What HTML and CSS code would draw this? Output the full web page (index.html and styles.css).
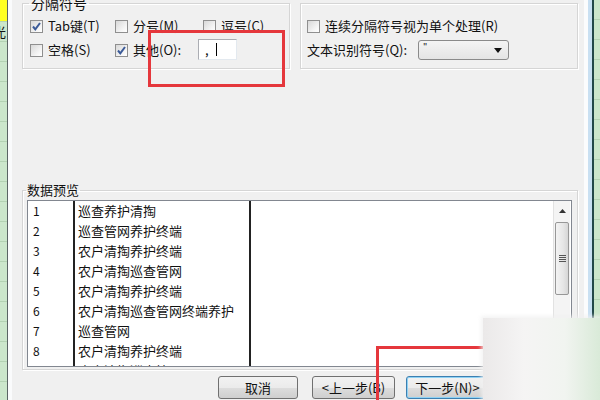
FILE: index.html
```html
<!DOCTYPE html>
<html lang="zh-CN">
<head>
    <meta charset="UTF-8">
    <title>文本导入向导</title>
    <link rel="stylesheet" href="styles.css">
</head>
<body>
<div class="screen">
    <div class="sheet sheet-left">
        <div class="cell yellow"></div>
        <div class="cell"><span class="cut">光</span></div>
        <div class="cell"></div>
        <div class="cell"></div>
        <div class="cell"></div>
        <div class="cell"></div>
        <div class="cell"></div>
        <div class="cell"></div>
        <div class="cell"></div>
        <div class="cell"></div>
        <div class="cell"></div>
        <div class="cell"></div>
        <div class="cell"></div>
        <div class="cell"></div>
        <div class="cell"></div>
        <div class="cell"></div>
        <div class="cell"></div>
        <div class="cell"></div>
        <div class="cell"></div>
        <div class="cell"></div>
    </div>

    <div class="dialog">
        <div class="top-row">
            <fieldset class="group group-sep">
                <legend>分隔符号</legend>
                <div class="opt-grid">
                    <label class="opt"><span class="cb checked"></span>Tab键(T)</label>
                    <label class="opt"><span class="cb"></span>分号(M)</label>
                    <label class="opt opt-shift"><span class="cb"></span>逗号(C)</label>
                    <label class="opt"><span class="cb"></span>空格(S)</label>
                    <label class="opt"><span class="cb checked"></span>其他(O):</label>
                    <div class="other-input"><span>,</span><span class="caret"></span></div>
                </div>
            </fieldset>
            <fieldset class="group group-opts">
                <label class="opt"><span class="cb"></span>连续分隔符号视为单个处理(R)</label>
                <div class="opt">
                    文本识别符号(Q):
                    <div class="combo">
                        <span class="combo-text">"</span>
                        <svg class="combo-arrow" width="8" height="5" viewBox="0 0 8 5"><path d="M0 0H8L4 5Z" fill="#111"/></svg>
                    </div>
                </div>
            </fieldset>
        </div>

        <fieldset class="group preview">
            <legend>数据预览</legend>
            <div class="preview-box">
                <div class="grid">
                    <div class="row"><span class="c1">1</span><span class="c2">巡查养护清掏</span></div>
                    <div class="row"><span class="c1">2</span><span class="c2">巡查管网养护终端</span></div>
                    <div class="row"><span class="c1">3</span><span class="c2">农户清掏养护终端</span></div>
                    <div class="row"><span class="c1">4</span><span class="c2">农户清掏巡查管网</span></div>
                    <div class="row"><span class="c1">5</span><span class="c2">农户清掏养护终端</span></div>
                    <div class="row"><span class="c1">6</span><span class="c2">农户清掏巡查管网终端养护</span></div>
                    <div class="row"><span class="c1">7</span><span class="c2">巡查管网</span></div>
                    <div class="row"><span class="c1">8</span><span class="c2">农户清掏养护终端</span></div>
                    <div class="row"><span class="c1">9</span><span class="c2">农户清掏巡查管网</span></div>
                </div>
                <div class="scrollbar">
                    <div class="sb-up">
                        <svg width="7" height="4" viewBox="0 0 7 4"><path d="M0 4L3.5 0L7 4Z" fill="#333"/></svg>
                    </div>
                    <div class="sb-thumb">
                        <span class="grip"></span><span class="grip"></span><span class="grip"></span><span class="grip"></span>
                    </div>
                </div>
            </div>
        </fieldset>

        <div class="buttons">
            <button class="btn btn-cancel">取消</button>
            <button class="btn btn-prev">&lt;上一步(B)</button>
            <button class="btn btn-next default">下一步(N)&gt;</button>
        </div>
    </div>

    <div class="win-edge"></div>
    <div class="sheet sheet-right">
        <div class="cell"></div>
        <div class="cell"></div>
        <div class="cell"></div>
        <div class="cell"></div>
        <div class="cell"></div>
        <div class="cell"></div>
        <div class="cell"></div>
        <div class="cell"></div>
        <div class="cell"></div>
        <div class="cell"></div>
        <div class="cell"></div>
        <div class="cell"></div>
        <div class="cell"></div>
        <div class="cell"></div>
        <div class="cell"></div>
        <div class="cell"></div>
        <div class="cell"></div>
        <div class="cell"></div>
        <div class="cell"></div>
        <div class="cell"></div>
    </div>
</div>

<!-- 截图上的红色标注框和水印 -->
<div class="mark mark-other"></div>
<div class="mark mark-next"></div>
<div class="watermark"></div>
</body>
</html>
```

FILE: styles.css
```css
* {
    margin: 0;
    padding: 0;
    box-sizing: border-box;
}

html, body {
    width: 600px;
    height: 400px;
    overflow: hidden;
}

body {
    font-family: "Noto Sans CJK SC", "Noto Sans", sans-serif;
    font-size: 13px;
    line-height: 14px;
    color: #111;
    background: #f0f0f0;
}

.screen {
    display: flex;
    width: 600px;
    height: 400px;
    overflow: hidden;
}

/* 背后的表格 */
.sheet {
    display: flex;
    flex-direction: column;
    overflow: hidden;
    background: #cbe6cb;
}

.sheet-left {
    width: 7px;
}

.sheet-right {
    width: 6px;
}

.sheet .cell {
    height: 20px;
    flex-shrink: 0;
    border-bottom: 1px solid #b3d2b3;
    overflow: hidden;
    font-size: 13px;
    line-height: 19px;
}

.sheet .cell.yellow {
    height: 22px;
    background: #ffff22;
}

.sheet .cell .cut {
    display: block;
    margin-left: -7px;
}

/* 对话框 */
.dialog {
    width: 576px;
    height: 400px;
    overflow: hidden;
    padding: 0 5px 0 14px;
    border-left: 1px solid #5a6464;
    box-shadow: inset 4px 0 0 #fafbfc;
    background: #f0f0f0;
}

.win-edge {
    width: 11px;
    background: linear-gradient(to right, #f0f0f0 0, #f0f0f0 1px, #fbfcfd 1px, #fbfcfd 5px, #c9e0f2 5px, #c9e0f2 9px, #234848 9px, #234848 11px);
}

.top-row {
    display: flex;
    gap: 10px;
    align-items: flex-start;
    margin-top: -4px;
}

.group {
    border: 1px solid #d5d5d5;
    box-shadow: 1px 1px 0 #ffffff, inset 1px 1px 0 #ffffff;
}

.group legend {
    padding: 0 2px;
    margin-left: -1px;
    line-height: 14px;
}

.group-sep {
    width: 268px;
    height: 73px;
    padding: 6px 6px 0 7px;
}

.group-sep legend {
    font-size: 14px;
}

.group-opts {
    flex: 1;
    height: 66px;
    margin-top: 7px;
    padding: 12px 6px 0 6px;
    display: flex;
    flex-direction: column;
    gap: 4px;
}

.opt-grid {
    display: grid;
    grid-template-columns: 85px 83px 1fr;
    row-gap: 4px;
}

.opt {
    display: flex;
    align-items: center;
    height: 20px;
    white-space: nowrap;
}

.opt-shift {
    margin-left: 5px;
}

.cb {
    width: 13px;
    height: 13px;
    margin-right: 5px;
    flex-shrink: 0;
    border: 1px solid #8f8f8f;
    background: linear-gradient(135deg, #d8d8d8, #f6f6f6 70%, #ffffff);
}

.cb.checked {
    background: url("data:image/svg+xml,%3Csvg xmlns='http://www.w3.org/2000/svg' width='11' height='11'%3E%3Cpath d='M2 5.5L4.3 8.3L9 2' fill='none' stroke='%233b5a98' stroke-width='2'/%3E%3C/svg%3E") no-repeat center, linear-gradient(135deg, #d8d8d8, #f6f6f6 70%, #ffffff);
}

.other-input {
    width: 39px;
    height: 21px;
    margin-top: -1px;
    border: 1px solid #abadb3;
    border-color: #abadb3 #e3e9ef #e3e9ef #abadb3;
    background: #fff;
    display: flex;
    align-items: center;
    padding-left: 6px;
    gap: 7px;
    font-size: 13px;
}

.caret {
    width: 1px;
    height: 13px;
    background: #000;
}

.combo {
    width: 91px;
    height: 20px;
    margin-left: 11px;
    border: 1px solid #8a8a8a;
    border-radius: 3px;
    background: linear-gradient(#f4f4f4, #e4e4e4);
    display: flex;
    align-items: center;
    justify-content: space-between;
    padding: 0 6px 0 4px;
}

.combo-text {
    font-size: 9px;
    line-height: 9px;
    align-self: flex-start;
    margin-top: 2px;
}

/* 数据预览 */
.preview {
    margin-top: 114px;
    padding: 3px 5px 2px 4px;
}

.preview legend {
    padding: 0 1px;
    font-size: 13px;
}

.preview-box {
    display: flex;
    height: 167px;
    border: 1px solid #828790;
    background: #fff;
    overflow: hidden;
}

.grid {
    flex: 1;
    background: linear-gradient(to right, transparent 45px, #222 45px, #222 47px, transparent 47px, transparent 221px, #222 221px, #222 223px, transparent 223px);
}

.row {
    display: flex;
    height: 20px;
    line-height: 20px;
    font-size: 13px;
    white-space: nowrap;
}

.row .c1 {
    width: 47px;
    padding-left: 5px;
    font-size: 12px;
}

.row .c2 {
    padding-left: 3px;
}

.scrollbar {
    width: 17px;
    margin-right: 1px;
    border-left: 1px solid #e2e2e2;
    background: #f4f4f4;
}

.sb-up {
    height: 20px;
    display: flex;
    align-items: center;
    justify-content: center;
}

.sb-thumb {
    height: 73px;
    margin: 1px 1px 0 1px;
    border: 1px solid #979797;
    border-radius: 2px;
    background: linear-gradient(to right, #f3f3f3, #e6e6e6 60%, #d6d6d6);
    display: flex;
    flex-direction: column;
    align-items: center;
    justify-content: center;
    gap: 1px;
}

.grip {
    width: 7px;
    height: 1px;
    background: #555;
}

/* 按钮 */
.buttons {
    display: flex;
    margin: 6px 0 0 196px;
    gap: 14px;
}

.btn {
    height: 23px;
    font-family: inherit;
    font-size: 13px;
    color: #111;
    border: 1px solid #707070;
    border-radius: 3px;
    background: linear-gradient(#f2f2f2 0, #ebebeb 50%, #dddddd 51%, #cfcfcf 100%);
}

.btn-cancel {
    width: 80px;
}

.btn-prev {
    width: 83px;
}

.btn-next {
    width: 83px;
    margin-left: -3px;
}

.btn.default {
    border-color: #3c7fb1;
    box-shadow: inset 0 0 0 1px #8fd2f4;
}

/* 截图上的标注 */
.mark {
    position: absolute;
    border: 3px solid #e5373c;
}

.mark-other {
    left: 148px;
    top: 30px;
    width: 137px;
    height: 57px;
}

.mark-next {
    left: 376px;
    top: 346px;
    width: 200px;
    height: 100px;
}

.watermark {
    position: absolute;
    left: 483px;
    top: 318px;
    width: 117px;
    height: 82px;
    background: linear-gradient(to right, #ebe9e9 0, #f5f4f4 35%, #f1f4f0 70%, #d9ead8 100%);
    box-shadow: 0 0 4px 2px rgba(240, 240, 240, 0.8);
}
```
